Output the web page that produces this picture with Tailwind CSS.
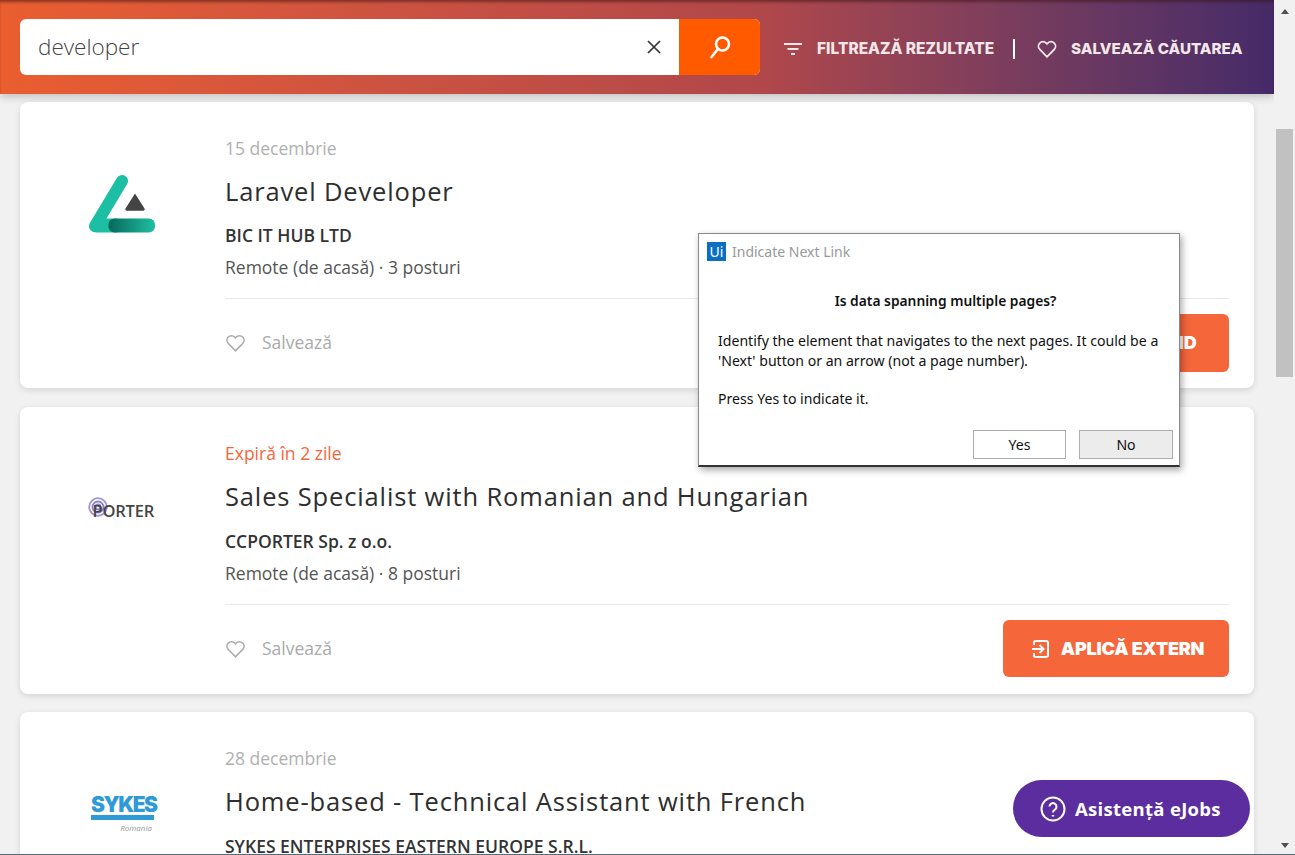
<!DOCTYPE html>
<html lang="ro">
<head>
<meta charset="utf-8">
<title>eJobs</title>
<script src="https://cdn.jsdelivr.net/npm/@tailwindcss/browser@4"></script>
</head>
<body class="h-[855px] w-[1295px] overflow-hidden bg-[#f1f1f1] font-['Open_Sans',sans-serif]">
<div class="relative flex h-[855px] w-[1295px] overflow-hidden border-b border-[#4d6f76]">
  <main class="relative h-full w-[1274px] overflow-hidden">
    <header class="relative z-10 flex h-[94px] items-center bg-gradient-to-r from-[#ea5e2f] via-[#b0474a] via-60% to-[#452a68] pl-5 pr-8 shadow-[inset_0_3px_3px_-1px_rgba(60,20,20,0.55),0_3px_8px_rgba(0,0,0,0.2)]">
      <div class="flex h-14 w-[740px] shrink-0 overflow-hidden rounded-md bg-white">
        <div class="flex flex-1 items-center pl-[18px] pr-[17px] text-[22.5px] font-light text-[#444]">
          <span class="flex-1">developer</span>
          <svg class="h-4 w-4" viewBox="0 0 16 16" fill="none" stroke="#333" stroke-width="1.7"><path d="M2 2l12 12M14 2L2 14"/></svg>
        </div>
        <div class="flex w-[81px] items-center justify-center bg-[#ff5a00]">
          <svg class="h-6 w-6" viewBox="0 0 24 24" fill="none" stroke="#fff" stroke-width="2.6" stroke-linecap="round"><circle cx="14.500" cy="9" r="6.500"/><path d="M10 14L3.500 22"/></svg>
        </div>
      </div>
      <div class="ml-[23px] flex items-center pt-1 text-[15.5px] font-extrabold text-[#f3e7e7] font-['Inter',sans-serif]">
        <svg class="h-3.5 w-5" viewBox="0 0 20 14" fill="none" stroke="#f3e7e7" stroke-width="2"><path d="M1 2h18M4.500 7h11M8 12h4"/></svg>
        <span class="ml-3.5 w-[178px] whitespace-nowrap">FILTREAZĂ REZULTATE</span>
        <span class="ml-[18px] mr-[22px] h-5 w-0.5 bg-white"></span>
        <svg class="h-[18px] w-5" viewBox="0 0 24 22" fill="none" stroke="#f3e7e7" stroke-width="2.2"><path d="M12 20.500L3.200 11.600a5.600 5.600 0 0 1 0-7.900 5.500 5.500 0 0 1 7.800 0l1 1 1-1a5.500 5.500 0 0 1 7.800 0 5.600 5.600 0 0 1 0 7.900z"/></svg>
        <span class="ml-3.5 whitespace-nowrap text-[15.2px]">SALVEAZĂ CĂUTAREA</span>
      </div>
    </header>

    <div class="flex flex-col px-5 pt-2">
      <article class="flex h-[286px] rounded-lg bg-white shadow-[0_2px_6px_rgba(0,0,0,0.12)]">
        <div class="ml-[42px] mt-[42px] flex h-[120px] w-[120px] items-center justify-center">
          <svg class="h-[60px] w-[68px]" viewBox="0 0 68 60">
            <defs><linearGradient id="lg" x1="0" x2="1" y1="0" y2="0"><stop offset="0" stop-color="#07685a"/><stop offset="1" stop-color="#1fbfa3"/></linearGradient></defs>
            <path d="M34 7L7 52" fill="none" stroke="#1cbfa3" stroke-width="12" stroke-linecap="round"/>
            <rect x="3" y="44.500" width="30" height="14" rx="5" fill="#1cbfa3"/>
            <rect x="20.500" y="44.500" width="46.500" height="14" rx="6" fill="url(#lg)"/>
            <path d="M47 19.500l9.500 15a1.500 1.500 0 0 1-1.300 2.300H38.800a1.500 1.500 0 0 1-1.300-2.300l9.500-15z" fill="#444"/>
          </svg>
        </div>
        <div class="ml-[43px] flex-1 pr-[25px] pt-[34px]">
          <p class="text-[17.5px] leading-6 text-[#b0b0b0]">15 decembrie</p>
          <h2 class="mt-[13px] text-[25.5px] font-medium leading-9 tracking-[0.85px] text-[#2e2e2e]">Laravel Developer</h2>
          <p class="mt-[14px] text-[17.5px] font-semibold leading-6 text-[#333]">BIC IT HUB LTD</p>
          <p class="mt-2 text-[17.5px] leading-6 text-[#555]">Remote (de acasă) · 3 posturi</p>
          <div class="mt-[19px] flex h-[88px] items-center justify-between border-t border-[#e8e8e8]">
            <span class="flex items-center gap-4 text-[17.5px] text-[#aaa]">
              <svg class="h-[18px] w-[21px]" viewBox="0 0 24 22" fill="none" stroke="#aaa" stroke-width="2"><path d="M12 20.500L3.200 11.600a5.600 5.600 0 0 1 0-7.900 5.500 5.500 0 0 1 7.800 0l1 1 1-1a5.500 5.500 0 0 1 7.800 0 5.600 5.600 0 0 1 0 7.900z"/></svg>
              Salvează
            </span>
            <span class="flex h-[58px] w-[226px] items-center justify-center gap-3 rounded-md bg-[#f5663b] pl-[3px] text-[18px] font-black text-white font-['Inter',sans-serif]">
              <svg class="h-[18px] w-[18px]" viewBox="0 0 18 18" fill="none" stroke="#fff" stroke-width="2"><path d="M3 5V2.500A1.500 1.500 0 0 1 4.500 1h10.500a2 2 0 0 1 2 2v12a2 2 0 0 1-2 2H4.500A1.500 1.500 0 0 1 3 15.500V13M1 9h11M8.500 5l4 4-4 4"/></svg>
              APLICĂ RAPID
            </span>
          </div>
        </div>
      </article>

      <article class="mt-[19px] flex h-[287px] rounded-lg bg-white shadow-[0_2px_6px_rgba(0,0,0,0.12)]">
        <div class="ml-[42px] mt-[42px] flex h-[120px] w-[120px] items-center justify-center">
          <div class="relative flex h-[22px] w-[68px] items-center justify-end pr-[2px]">
            <svg class="absolute -top-[1px] left-0 h-[20px] w-[20px]" viewBox="0 0 20 20" fill="none" stroke="#9d93d6" stroke-width="1.800"><circle cx="10" cy="10" r="8.800"/><circle cx="10" cy="10" r="5.500" stroke="#8a80c8"/><circle cx="10" cy="10" r="2.500" stroke="#8a80c8"/></svg>
            <span class="relative top-[2px] text-[16.5px] font-semibold leading-none tracking-[-0.2px] text-[#444]">PORTER</span>
          </div>
        </div>
        <div class="ml-[43px] flex-1 pr-[25px] pt-[34px]">
          <p class="text-[17.5px] leading-6 text-[#f5663b]">Expiră în 2 zile</p>
          <h2 class="mt-[13px] text-[25.5px] font-medium leading-9 tracking-[0.85px] text-[#2e2e2e]">Sales Specialist with Romanian and Hungarian</h2>
          <p class="mt-[15px] text-[17.5px] font-semibold leading-6 text-[#333]">CCPORTER Sp. z o.o.</p>
          <p class="mt-2 text-[17.5px] leading-6 text-[#555]">Remote (de acasă) · 8 posturi</p>
          <div class="mt-[19px] flex h-[88px] items-center justify-between border-t border-[#e8e8e8]">
            <span class="flex items-center gap-4 text-[17.5px] text-[#aaa]">
              <svg class="h-[18px] w-[21px]" viewBox="0 0 24 22" fill="none" stroke="#aaa" stroke-width="2"><path d="M12 20.500L3.200 11.600a5.600 5.600 0 0 1 0-7.900 5.500 5.500 0 0 1 7.800 0l1 1 1-1a5.500 5.500 0 0 1 7.800 0 5.600 5.600 0 0 1 0 7.900z"/></svg>
              Salvează
            </span>
            <span class="flex h-[57px] w-[226px] items-center justify-center gap-3 rounded-md bg-[#f5663b] pl-[3px] text-[18px] font-black tracking-[-0.2px] text-white font-['Inter',sans-serif]">
              <svg class="h-[18px] w-[18px]" viewBox="0 0 18 18" fill="none" stroke="#fff" stroke-width="2"><path d="M3 5V2.500A1.500 1.500 0 0 1 4.500 1h10.500a2 2 0 0 1 2 2v12a2 2 0 0 1-2 2H4.500A1.500 1.500 0 0 1 3 15.500V13M1 9h11M8.500 5l4 4-4 4"/></svg>
              APLICĂ EXTERN
            </span>
          </div>
        </div>
      </article>

      <article class="mt-[18px] flex h-[286px] rounded-lg bg-white shadow-[0_2px_6px_rgba(0,0,0,0.12)]">
        <div class="ml-[42px] mt-[42px] flex h-[120px] w-[120px] items-center justify-center">
          <div class="ml-[2px] flex w-[64px] flex-col items-stretch">
            <span class="whitespace-nowrap text-left text-[21px] font-black leading-[16px] tracking-[-1.500px] text-[#2e9bd8] font-['Inter',sans-serif]">SYKES</span>
            <span class="mt-[2px] h-[5px] w-[63px] bg-[#2e9bd8]"></span>
            <span class="mt-[3px] pr-[3px] text-right text-[8px] italic leading-[9px] text-[#999]">Romania</span>
          </div>
        </div>
        <div class="ml-[43px] flex-1 pr-[25px] pt-[34px]">
          <p class="text-[17.5px] leading-6 text-[#b0b0b0]">28 decembrie</p>
          <h2 class="mt-[13px] text-[25.5px] font-medium leading-9 tracking-[0.85px] text-[#2e2e2e]">Home-based - Technical Assistant with French</h2>
          <p class="mt-[15px] text-[17.5px] font-semibold leading-6 text-[#333]">SYKES ENTERPRISES EASTERN EUROPE S.R.L.</p>
        </div>
      </article>
    </div>

    <button class="absolute left-[1013px] top-[780px] z-20 flex h-[57px] w-[237px] items-center gap-[9px] rounded-full bg-[#5b2d9e] pl-[27px] text-[18.5px] font-bold tracking-[0.3px] text-white">
      <svg class="h-[26px] w-[26px]" viewBox="0 0 26 26" fill="none" stroke="#fff" stroke-width="2"><circle cx="13" cy="13" r="11.500"/><path d="M9.500 10.500a3.500 3.500 0 1 1 5.500 3c-1.300.9-2 1.500-2 3"/><path d="M13 19v1.500" stroke-width="2.400"/></svg>
      Asistență eJobs
    </button>

    <section class="absolute left-[698px] top-[233px] z-30 flex h-[234px] w-[482px] flex-col border border-[#8a8a8a] border-b-2 border-b-[#333] bg-white font-['Noto_Sans',sans-serif] text-[14.1px] text-[#111] shadow-[2px_3px_7px_rgba(0,0,0,0.35)]">
      <div class="flex items-center gap-[6px] pl-2 pt-[7px]">
        <span class="flex h-[19px] w-[19px] items-center justify-center bg-[#0a6fc2] text-[14px] leading-none text-white">Ui</span>
        <span class="text-[14px] text-[#999]">Indicate Next Link</span>
      </div>
      <p class="mt-[29px] pl-[13px] text-center text-[13.8px] font-semibold">Is data spanning multiple pages?</p>
      <div class="mt-[19px] px-[19px]">
        <p class="leading-5">Identify the element that navigates to the next pages. It could be a<br>'Next' button or an arrow (not a page number).</p>
        <p class="mt-[18px] leading-5">Press Yes to indicate it.</p>
      </div>
      <div class="mt-auto flex justify-end gap-[13px] pb-[6px] pr-[6px]">
        <span class="flex h-[29px] w-[93px] items-center justify-center border border-[#adadad] bg-white">Yes</span>
        <span class="flex h-[29px] w-[94px] items-center justify-center border border-[#adadad] bg-[#ececec]">No</span>
      </div>
    </section>
  </main>

  <aside class="flex h-full w-[21px] flex-col items-center bg-[#f1f1f1]">
    <div class="mt-[9px] h-0 w-0 border-x-[4.500px] border-b-[5px] border-x-transparent border-b-[#505050]"></div>
    <div class="mt-[115px] h-[248px] w-[17px] bg-[#c1c1c1]"></div>
    <div class="mt-auto mb-[6px] h-0 w-0 border-x-[4.500px] border-t-[5px] border-x-transparent border-t-[#505050]"></div>
  </aside>
</div>
</body>
</html>
